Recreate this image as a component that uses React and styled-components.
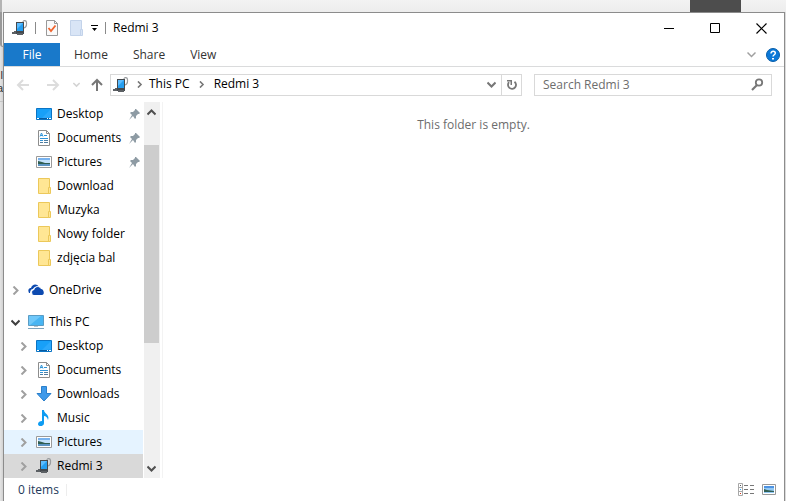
import React from "react";
import styled, { createGlobalStyle } from "styled-components";

const GlobalStyle = createGlobalStyle`
  * { box-sizing: border-box; }
  body { margin: 0; }
  body, button, input {
    font-family: "Open Sans", "Noto Sans", sans-serif;
    font-size: 12px;
    line-height: 16px;
    color: #000;
  }
  button { padding: 0; border: 0; background: none; cursor: default; white-space: nowrap; }
  svg { display: block; flex: none; }
`;

/* ---------- backdrop ---------- */

const Backdrop = styled.div`
  display: flex;
  flex-direction: column;
  min-height: 100vh;
  background: #e6e6e6;
`;

const BehindBar = styled.div`
  display: flex;
  justify-content: flex-end;
  height: 12px;
  padding-right: 45px;
  border-left: 2px solid #b4b4b4;
  background: linear-gradient(#f3f3f3, #ededed);
`;

const BehindTab = styled.div`
  width: 51px;
  background: #4d4d4d;
`;

const BehindRow = styled.div`
  display: flex;
  flex: 1;
`;

const Gutter = styled.div`
  display: flex;
  flex-direction: column;
  align-items: flex-end;
  width: ${(p) => p.$width}px;
  overflow: hidden;
  font: 11px/13px "Liberation Sans", sans-serif;
  color: #333;
  background: linear-gradient(90deg, #e4e4e4, #d2d2d2);
`;

const GutterPanel = styled.span`
  width: 100%;
  height: 35px;
  margin-bottom: 22px;
  border: 1px solid #999;
  border-width: 0 0 1px 2px;
  border-radius: 0 0 0 3px;
  background: #ededed;
`;

const GutterRule = styled.span`
  width: 100%;
  margin-top: 6px;
  border-top: 1px solid #c4c4c4;
`;

/* ---------- window ---------- */

const Window = styled.main`
  display: flex;
  flex: 1;
  flex-direction: column;
  min-width: 0;
  border: 1px solid #8c8c8c;
  border-bottom: 0;
  background: #fff;
`;

const TitleBar = styled.header`
  display: flex;
  align-items: center;
  height: 30px;
  padding-left: 8px;
`;

const QuickAccess = styled.div`
  display: flex;
  align-items: center;
  gap: 7px;
`;

const Separator = styled.span`
  width: 1px;
  height: 12px;
  background: ${(p) => p.$color || "#8a8a8a"};
`;

const WindowTitle = styled.h1`
  flex: 1;
  margin: 0 0 0 7px;
  font-size: 12px;
  font-weight: 400;
`;

const IconButton = styled.button`
  display: flex;
  align-items: center;
  justify-content: center;
  flex: none;
  width: ${(p) => p.$width}px;
  height: ${(p) => p.$height || 20}px;
`;

const Ribbon = styled.nav`
  display: flex;
  align-items: center;
  gap: 1px;
  height: 24px;
  padding-right: 1px;
  border-bottom: 1px solid #dadbdc;
`;

const Tab = styled.button`
  height: 23px;
  padding: 0 12px;
  color: #333;
`;

const FileTab = styled(Tab)`
  width: 56px;
  margin-right: 1px;
  color: #fff;
  background: #1979ca;
`;

const Spacer = styled.span`
  flex: 1;
`;

const NavBar = styled.div`
  display: flex;
  align-items: center;
  height: 35px;
  padding: 0 12px 0 4px;
`;

const AddressBar = styled.div`
  display: flex;
  align-items: center;
  flex: 412 1 412px;
  min-width: 0;
  height: 22px;
  padding-left: 2px;
  border: 1px solid #d9d9d9;
`;

const Crumb = styled.button`
  height: 20px;
  padding-bottom: 2px;
`;

const RefreshButton = styled(IconButton)`
  border-left: 1px solid #d9d9d9;
`;

const SearchBox = styled.label`
  display: flex;
  align-items: center;
  flex: 238 1 238px;
  min-width: 0;
  height: 22px;
  margin-left: 12px;
  padding: 0 7px 0 8px;
  border: 1px solid #d9d9d9;
`;

const SearchInput = styled.input`
  flex: 1;
  min-width: 0;
  padding: 0;
  border: 0;
  outline: 0;
  background: none;
  &::placeholder { color: #6d6d6d; opacity: 1; }
`;

const Body = styled.div`
  display: flex;
  flex: 1;
`;

const Tree = styled.aside`
  width: 139px;
`;

const Group = styled.ul`
  margin: 0 0 ${(p) => (p.$last ? 0 : 8)}px;
  padding: 0;
  list-style: none;
`;

const Row = styled.li`
  display: flex;
  align-items: center;
  height: 24px;
  padding: 0 2px 0 ${(p) => (p.$nested ? 12 : 4)}px;
  background: ${(p) => ({ hover: "#e5f3ff", selected: "#d9d9d9" })[p.$state] || "transparent"};
`;

const Expander = styled.button`
  display: flex;
  align-items: center;
  justify-content: center;
  width: 15px;
  height: 24px;
  margin-right: 5px;
`;

const RowLabel = styled.button`
  display: flex;
  align-items: center;
  flex: 1;
  gap: 5px;
  height: 24px;
`;

const ScrollTrack = styled.div`
  display: flex;
  flex-direction: column;
  width: 16px;
  margin-left: 1px;
  background: #f0f0f0;
`;

const ScrollSpace = styled.div`
  flex: ${(p) => p.$share};
`;

const ScrollThumb = styled.div`
  flex: 198;
  margin-right: 1px;
  background: #cdcdcd;
`;

const Content = styled.section`
  flex: 1;
  margin-left: 2px;
  padding-top: 15px;
  border-left: 1px solid #f3f3f3;
  text-align: center;
  color: #6d6d6d;
`;

const EmptyText = styled.p`
  margin: 0;
`;

const StatusBar = styled.footer`
  display: flex;
  align-items: center;
  height: 23px;
  padding: 0 4px 0 14px;
  color: #1e395b;
`;

const ItemCount = styled.span`
  width: 48px;
`;

/* ---------- icons ---------- */

const Svg = ({ w = 16, h = 16, children }) => (
  <svg width={w} height={h} viewBox={`0 0 ${w} ${h}`} fill="none" aria-hidden="true">
    {children}
  </svg>
);

const DeviceIcon = () => (
  <Svg>
    <path d="M11 2c0-2 3.500-2 3.500 0.500v2c0 2-1 3-2.500 3.500" stroke="#9a9d9f" strokeWidth="1.2" />
    <path d="M4 2h8v12H4z" fill="#44494e" />
    <path d="M5 3h6v8H5z" fill="#259ef0" />
    <path d="M5 3h6L5 9z" fill="#5bbcff" />
    <path d="M0 12h2v-1h2v3H0zM5 13h6v2H5z" fill="#5c6064" />
  </Svg>
);

const CheckPageIcon = () => (
  <Svg w={14}>
    <path d="M1.5.5h8l3 3v12h-11z" fill="#fafafa" stroke="#999" />
    <path d="M9.5.5v3h3" stroke="#999" />
    <path d="M3.500 8l2.500 3 4.500-5.500" stroke="#f0642d" strokeWidth="1.8" />
  </Svg>
);

const FolderIcon = ({ fill = "#ffe694", line = "#ecc85a" }) => (
  <Svg>
    <path d="M2.5.5h11v15h-11z" fill={fill} stroke={line} />
    <path d="M12.5 9.5h2v6h-2z" fill={fill} stroke={line} />
  </Svg>
);

const DesktopIcon = () => (
  <Svg>
    <path d="M.5 2.5h15v11H.5z" fill="#18a0f8" stroke="#0b74c4" />
    <path d="M15 3v8L5 13z" fill="#3fb2ff" opacity=".5" />
    <path d="M1 12h14v1H1z" fill="#075aa0" />
    <path d="M1 12h2v1H1zM11 12h1v1h-1zM13 12h2v1h-2z" fill="#fff" />
  </Svg>
);

const DocumentIcon = () => (
  <Svg>
    <path d="M2.5.5h8l3 3v12h-11z" fill="#fff" stroke="#8d8d8d" />
    <path d="M10.5.5v3h3" stroke="#8d8d8d" />
    <path d="M4 6.500l1.500-3.500 1.500 3.500M4.500 5.500h2M8 5.500h3M4 8.500h8M4 10.500h3" stroke="#2f94d8" />
    <path d="M8 10.500h4M4 12.500h3M8 12.500h4" stroke="#4f7da0" />
  </Svg>
);

const PictureIcon = () => (
  <Svg>
    <path d="M.5 2.5h15v11H.5z" fill="#fff" stroke="#9a9a9a" />
    <path d="M2 4h12v8H2z" fill="#c4e2fb" />
    <path d="M2 4h12v2H2z" fill="#78b2ee" />
    <path d="M2 7l4 1 3 1h5v1H2z" fill="#2f5d50" />
    <path d="M2 10h12v2H2z" fill="#5b93c2" />
  </Svg>
);

const CloudIcon = () => (
  <Svg>
    <path d="M1 11C-1 7 2 6 3 6c1-4 6-5 8-1-3-1-5 0-6 2-2 0-3 2-3 4z" fill="#0d4ab0" />
    <path d="M6 13c-3 0-3-5 0-5 1-4 6-4 7-1 3 0 4 6 1 6z" fill="#0d4ab0" />
    <path d="M4 12c-1-3 0-4 2-4.500C7 4 11 3.500 13 6.500" stroke="#fff" strokeWidth=".8" />
  </Svg>
);

const ComputerIcon = () => (
  <Svg>
    <path d="M.5 1.500h15v10H.5z" fill="#48b5f3" stroke="#5a9cc4" />
    <path d="M1 2h12L2 11H1z" fill="#8ad5ff" opacity=".6" />
    <path d="M6 12h4v1H6z" fill="#b8c4cc" />
    <path d="M0 14h16v1H0z" fill="#7da3bd" />
  </Svg>
);

const DownloadIcon = () => (
  <Svg>
    <path d="M5.500.5h5v7h4.500L8 15 1 7.500h4.500z" fill="#3f9aea" stroke="#2a7fcb" />
  </Svg>
);

const MusicIcon = () => (
  <Svg>
    <path d="M6 0h2c0 4 6 4 4 10-1-3-2-4-4-4v7c0 4-6 4-6 1 0-2 2-3 4-3z" fill="#0e9cf2" />
  </Svg>
);

const PinIcon = () => (
  <Svg w={12} h={12}>
    <path d="M7 1l4 4-1 1-1 0-2 2v2L6 11 4 8 0 12l3-5-2-2 1-1h2l2-2V1z" fill="#8e9ba4" />
  </Svg>
);

const Chevron = ({ dir = "right", color = "#a0a0a0", size = 9, weight = 2 }) => (
  <svg width={size} height={size} viewBox="0 0 9 9" fill="none" aria-hidden="true">
    <path
      d={{ right: "M2.500 0.500l4 4-4 4", down: "M0.500 2.500l4 4 4-4", up: "M0.500 6.500l4-4 4 4" }[dir]}
      stroke={color}
      strokeWidth={weight}
    />
  </svg>
);

const ArrowIcon = ({ dir }) => (
  <Svg w={14} h={14}>
    {dir === "left" && <path d="M13 7H2M7 2L2 7l5 5" stroke="#dcdcdc" strokeWidth="2" />}
    {dir === "right" && <path d="M1 7h11M7 2l5 5-5 5" stroke="#dcdcdc" strokeWidth="2" />}
    {dir === "up" && <path d="M7 13V2M2 7l5-5 5 5" stroke="#777" strokeWidth="2" />}
  </Svg>
);

const RefreshIcon = () => (
  <Svg w={12} h={12}>
    <path d="M8.500 2.700a4 4 0 1 1-5.500 0.500" stroke="#777" strokeWidth="1.800" />
    <path d="M1 1h5v5H4.500V2.500H1z" fill="#777" />
  </Svg>
);

const SearchIcon = () => (
  <Svg w={13} h={13}>
    <circle cx="8" cy="4.500" r="3.200" stroke="#777" strokeWidth="1.800" />
    <path d="M6 7L1 12" stroke="#777" strokeWidth="2.200" />
  </Svg>
);

const HelpIcon = () => (
  <Svg w={14} h={14}>
    <circle cx="7" cy="7" r="6.500" fill="#0b78d8" stroke="#085ea9" />
    <path d="M5 5.500c0-3 4.300-2.600 4.300-.3C9.300 6.700 7 6.800 7 8.600" stroke="#fff" strokeWidth="1.500" />
    <path d="M6 10h2v1.500H6z" fill="#fff" />
  </Svg>
);

const CustomizeIcon = () => (
  <Svg w={7} h={6}>
    <path d="M0 0h7v1H0zM1 3h5L3.500 6z" fill="#000" />
  </Svg>
);

const CaptionIcon = ({ kind }) => (
  <Svg w={11} h={11}>
    <path
      d={{ minimize: "M0 5.500h10", maximize: "M.5.5h9v9h-9z", close: "M.5.5l10 10M10.500.5l-10 10" }[kind]}
      stroke="#000"
      strokeWidth={kind === "close" ? 1.2 : 1}
    />
  </Svg>
);

const DetailsViewIcon = () => (
  <Svg w={17} h={13}>
    <path d="M.5.5h4v12h-4zM0 4.500h5M0 8.500h5" stroke="#a8a8a8" />
    <path d="M2 2h1v1H2z" fill="#555" />
    <path d="M2 6h1v1H2z" fill="#259ef0" />
    <path d="M2 10h1v1H2z" fill="#d33b1c" />
    <path d="M6 2.500h4m2 0h4M6 6.500h4m2 0h4M6 10.500h4m2 0h4" stroke="#777" />
  </Svg>
);

const ThumbnailViewIcon = () => (
  <Svg w={14} h={11}>
    <path d="M.5.5h13v10H.5z" fill="#fff" stroke="#999" />
    <path d="M2 2h10v7H2z" fill="#93c9f5" />
    <path d="M2 2h10v2H2z" fill="#4d93e2" />
    <path d="M2 5l3 1 7 1v1H2z" fill="#326054" />
  </Svg>
);

/* ---------- data ---------- */

const groups = [
  [
    { label: "Desktop", Icon: DesktopIcon, nested: true, pinned: true },
    { label: "Documents", Icon: DocumentIcon, nested: true, pinned: true },
    { label: "Pictures", Icon: PictureIcon, nested: true, pinned: true },
    { label: "Download", Icon: FolderIcon, nested: true },
    { label: "Muzyka", Icon: FolderIcon, nested: true },
    { label: "Nowy folder", Icon: FolderIcon, nested: true },
    { label: "zdjęcia bal", Icon: FolderIcon, nested: true },
  ],
  [{ label: "OneDrive", Icon: CloudIcon, expander: "right" }],
  [
    { label: "This PC", Icon: ComputerIcon, expander: "down" },
    { label: "Desktop", Icon: DesktopIcon, nested: true, expander: "right" },
    { label: "Documents", Icon: DocumentIcon, nested: true, expander: "right" },
    { label: "Downloads", Icon: DownloadIcon, nested: true, expander: "right" },
    { label: "Music", Icon: MusicIcon, nested: true, expander: "right" },
    { label: "Pictures", Icon: PictureIcon, nested: true, expander: "right", state: "hover" },
    { label: "Redmi 3", Icon: DeviceIcon, nested: true, expander: "right", state: "selected" },
  ],
];

const TreeRow = ({ label, Icon, nested, pinned, expander, state }) => (
  <Row $nested={nested} $state={state}>
    <Expander as={expander ? "button" : "span"} aria-label={expander ? `Expand ${label}` : undefined}>
      {expander && <Chevron dir={expander} color={expander === "down" ? "#404040" : "#a0a0a0"} />}
    </Expander>
    <RowLabel>
      <Icon />
      {label}
    </RowLabel>
    {pinned && <PinIcon />}
  </Row>
);

export default function App() {
  return (
    <>
      <GlobalStyle />
      <Backdrop>
        <BehindBar>
          <BehindTab />
        </BehindBar>
        <BehindRow>
          <Gutter $width={3} aria-hidden="true">
            <GutterPanel />
            <span>l</span>
            <span>a</span>
            <GutterRule />
          </Gutter>
          <Window>
            <TitleBar>
              <QuickAccess>
                <DeviceIcon />
                <Separator />
                <IconButton $width={18} aria-label="Properties"><CheckPageIcon /></IconButton>
                <IconButton $width={16} aria-label="New folder">
                  <FolderIcon fill="#d9e5f6" line="#c3d3ea" />
                </IconButton>
                <IconButton $width={7} aria-label="Customize Quick Access Toolbar"><CustomizeIcon /></IconButton>
                <Separator />
              </QuickAccess>
              <WindowTitle>Redmi 3</WindowTitle>
              <IconButton $width={46} $height={30} aria-label="Minimize"><CaptionIcon kind="minimize" /></IconButton>
              <IconButton $width={46} $height={30} aria-label="Maximize"><CaptionIcon kind="maximize" /></IconButton>
              <IconButton $width={46} $height={30} aria-label="Close"><CaptionIcon kind="close" /></IconButton>
            </TitleBar>
            <Ribbon>
              <FileTab>File</FileTab>
              <Tab>Home</Tab>
              <Tab>Share</Tab>
              <Tab>View</Tab>
              <Spacer />
              <IconButton $width={22} aria-label="Expand the Ribbon">
                <Chevron dir="down" weight={1.5} />
              </IconButton>
              <IconButton $width={20} aria-label="Help"><HelpIcon /></IconButton>
            </Ribbon>
            <NavBar>
              <IconButton $width={30} aria-label="Back"><ArrowIcon dir="left" /></IconButton>
              <IconButton $width={30} aria-label="Forward"><ArrowIcon dir="right" /></IconButton>
              <IconButton $width={16} aria-label="Recent locations">
                <Chevron dir="down" color="#d4d4d4" size={7} />
              </IconButton>
              <IconButton $width={26} aria-label="Up"><ArrowIcon dir="up" /></IconButton>
              <AddressBar>
                <DeviceIcon />
                <IconButton $width={20} aria-label="Locations"><Chevron color="#777" size={7} /></IconButton>
                <Crumb>This PC</Crumb>
                <IconButton $width={24} aria-label="This PC contents"><Chevron color="#777" size={7} /></IconButton>
                <Crumb>Redmi 3</Crumb>
                <Spacer />
                <IconButton $width={20} aria-label="Previous locations">
                  <Chevron dir="down" color="#777" />
                </IconButton>
                <RefreshButton $width={20} aria-label="Refresh"><RefreshIcon /></RefreshButton>
              </AddressBar>
              <SearchBox>
                <SearchInput type="text" placeholder="Search Redmi 3" aria-label="Search Redmi 3" />
                <SearchIcon />
              </SearchBox>
            </NavBar>
            <Body>
              <Tree>
                {groups.map((rows, i) => (
                  <Group key={i} $last={i === groups.length - 1}>
                    {rows.map((row) => <TreeRow key={row.label} {...row} />)}
                  </Group>
                ))}
              </Tree>
              <ScrollTrack>
                <IconButton $width={15} aria-label="Scroll up"><Chevron dir="up" color="#505050" /></IconButton>
                <ScrollSpace $share={23} />
                <ScrollThumb />
                <ScrollSpace $share={115} />
                <IconButton $width={15} aria-label="Scroll down"><Chevron dir="down" color="#505050" /></IconButton>
              </ScrollTrack>
              <Content>
                <EmptyText>This folder is empty.</EmptyText>
              </Content>
            </Body>
            <StatusBar>
              <ItemCount>0 items</ItemCount>
              <Separator $color="#ededed" />
              <Spacer />
              <IconButton $width={23} aria-label="Details view"><DetailsViewIcon /></IconButton>
              <IconButton $width={22} aria-label="Large icons view"><ThumbnailViewIcon /></IconButton>
            </StatusBar>
          </Window>
          <Gutter $width={1} />
        </BehindRow>
      </Backdrop>
    </>
  );
}
